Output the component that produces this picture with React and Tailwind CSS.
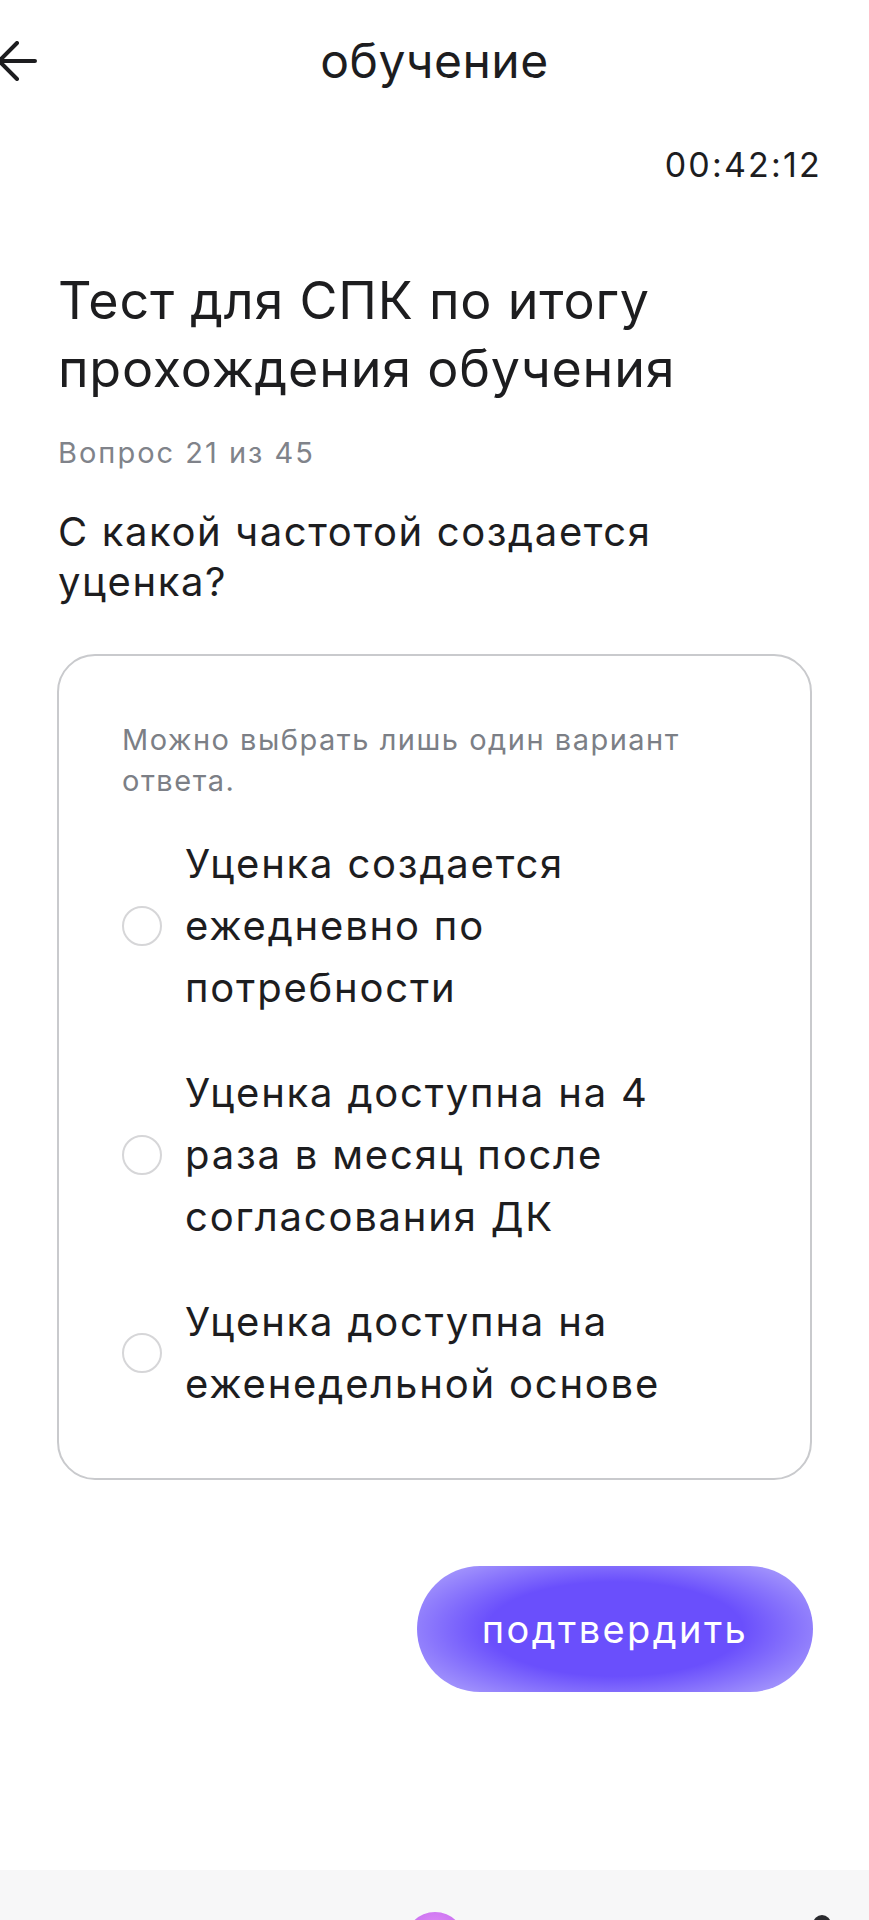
export default function App() {
  const options = [
    ["Уценка создается", "ежедневно по", "потребности"],
    ["Уценка доступна на 4", "раза в месяц после", "согласования ДК"],
    ["Уценка доступна на", "еженедельной основе"],
  ];
  return (
    <div
      className="flex h-[1920px] w-full flex-col overflow-hidden bg-white text-[#1d1d1f]"
      style={{ fontFamily: "Inter, 'Noto Sans', sans-serif" }}
    >
      <header className="grid h-[122px] grid-cols-[60px_1fr_60px] items-center">
        <svg width="40" height="40" viewBox="0 0 40 40" className="overflow-hidden" fill="none" stroke="#1d1d1f" strokeWidth="4" strokeLinecap="round" strokeLinejoin="round">
          <path d="M35 20 H1 M17 2 L-1 20 L17 38" />
        </svg>
        <h1 className="text-center text-[48px] leading-[122px] font-normal tracking-[0.5px]">обучение</h1>
        <div />
      </header>

      <div className="mt-[23px] flex justify-end pr-[47px]">
        <span className="text-[34px] leading-[40px] tracking-[2.2px]">00:42:12</span>
      </div>

      <main className="flex flex-col px-[58px]">
        <h2 className="mt-[82px] text-[52px] leading-[68px] font-normal tracking-[0.8px]">
          Тест для СПК по итогу
          <br />
          прохождения обучения
        </h2>
        <p className="mt-[32px] text-[29px] leading-[36px] tracking-[2px] text-[#80838a]">Вопрос 21 из 45</p>
        <p className="mt-[36px] text-[40px] leading-[50px] tracking-[1.6px]">
          С какой частотой создается
          <br />
          уценка?
        </p>

        <section className="mt-[47px] -ml-px w-[755px] rounded-[38px] border-2 border-[#c9cacd] px-[63px] pt-[63px] pb-[63px]">
          <p className="text-[29px] leading-[41px] tracking-[1.5px] text-[#7c7f86]">
            Можно выбрать лишь один вариант
            <br />
            ответа.
          </p>
          <div className="mt-[32px] flex flex-col gap-[43px]">
            {options.map((lines, i) => (
              <label key={i} className="flex items-center gap-[23px]">
                <span className="h-[40px] w-[40px] shrink-0 rounded-full border-2 border-[#d6d6d8] bg-white" />
                <span className="text-[40px] leading-[62px] tracking-[1.8px]">
                  {lines.map((l, j) => (
                    <span key={j} className="block whitespace-nowrap">
                      {l}
                    </span>
                  ))}
                </span>
              </label>
            ))}
          </div>
        </section>

        <div className="mt-[86px] flex justify-end">
          <button
            className="-mr-[2px] flex h-[126px] w-[396px] items-center justify-center rounded-full text-[38px] tracking-[2.4px] text-white"
            style={{ background: "radial-gradient(ellipse 62% 72% at center, #6a4ffc 52%, #aca0fc 100%)" }}
          >
            подтвердить
          </button>
        </div>
      </main>

      <nav className="relative mt-auto h-[50px] overflow-hidden bg-[#f7f7f8]">
        <div className="mx-auto mt-[42px] h-[60px] w-[60px] rounded-full bg-[radial-gradient(circle_at_50%_30%,#e08cf5,#b556ee)]" />
        <div className="absolute top-[45px] right-[38px] h-[10px] w-[18px] rounded-t-full bg-[#2a2a2e]" />
      </nav>
    </div>
  );
}
